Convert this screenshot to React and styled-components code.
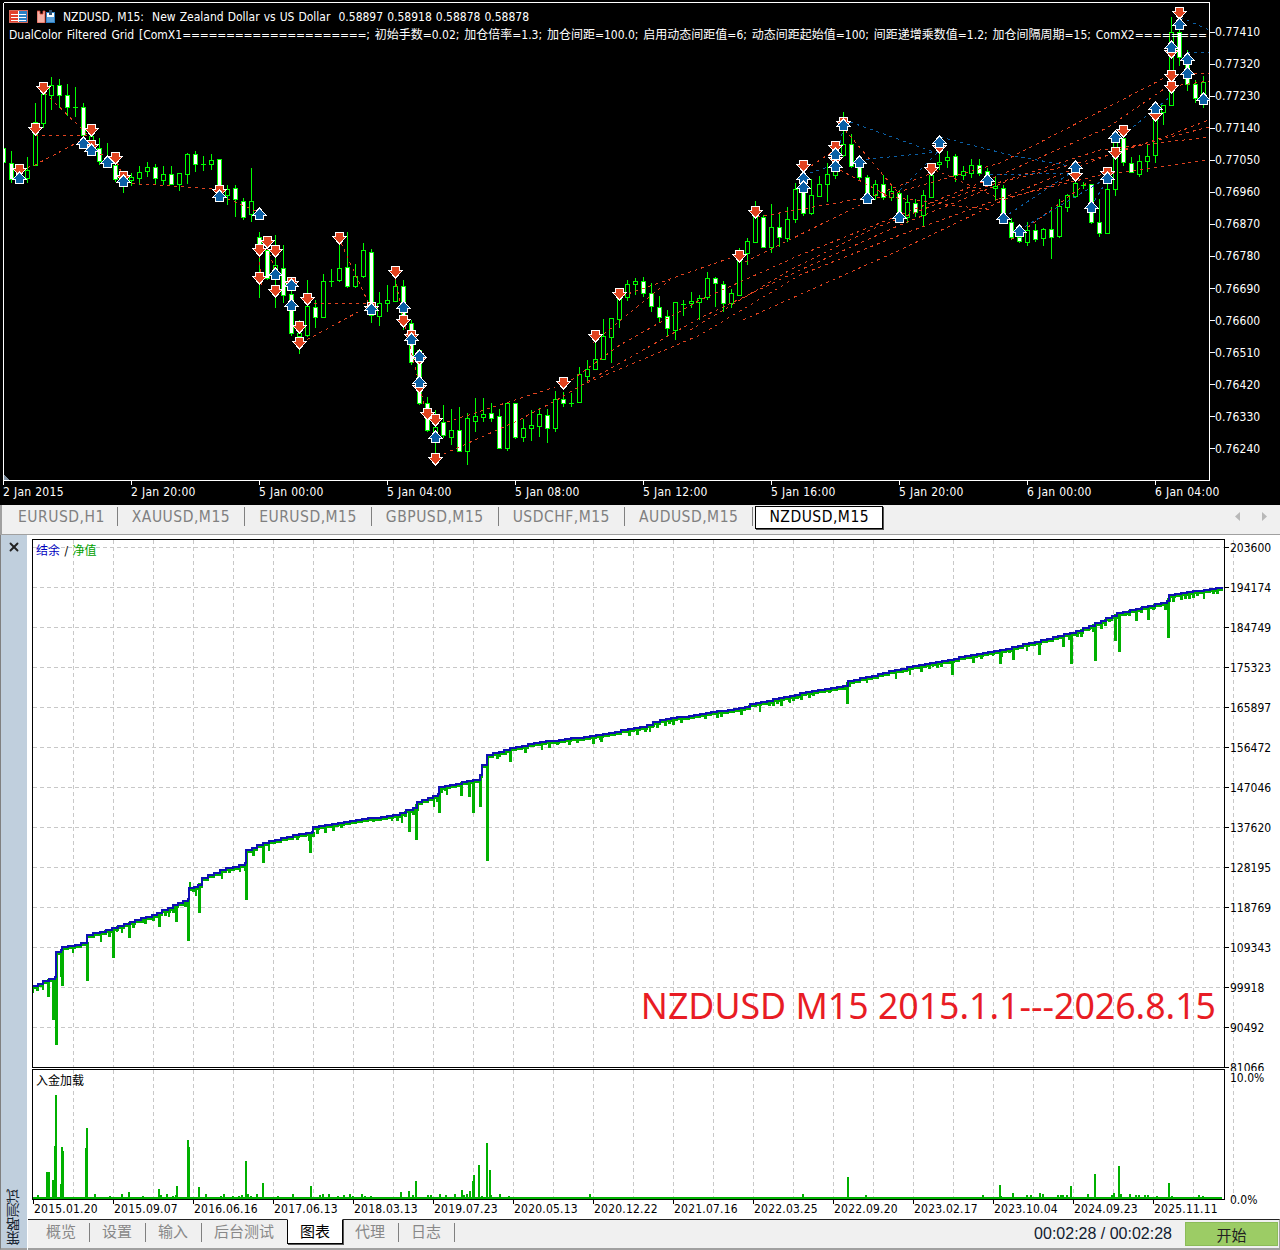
import React from 'react'
import styled, { createGlobalStyle } from 'styled-components'
import { X } from 'lucide-react'

const UI_FONT = '"DejaVu Sans Condensed", "DejaVu Sans", "Noto Sans CJK SC", sans-serif'
const RED = '#e0431f'
const BLUE = '#0b5fa5'

const GlobalStyle = createGlobalStyle`
  html, body { margin: 0; padding: 0; background: #fff; }
  #root { width: 1280px; height: 1250px; overflow: hidden; }
`

// ---- terminal chart data, page pixel coordinates ----
// x, high, low, body top, body bottom, white body
const candles = [
  [3,148,170,148,162,1],[11,151,183,163,179,1],[19,164,184,172,178,1],[27,157,183,170,178,0],
  [35,103,165,122,165,0],[43,94,128,94,123,0],[51,77,110,85,95,0],[59,79,108,85,95,1],
  [67,84,116,95,107,1],[75,87,117,107,107,0],[83,103,135,107,135,1],[91,130,150,136,146,0],
  [99,138,165,148,161,1],[107,143,165,162,165,0],[115,160,182,165,179,1],[123,176,193,180,186,1],
  [131,173,186,177,180,0],[139,166,185,172,178,0],[147,162,177,167,171,0],[155,164,184,167,178,1],
  [163,166,185,174,180,0],[171,166,185,174,184,1],[179,174,191,173,184,0],[187,153,184,154,174,0],
  [195,151,172,154,164,1],[203,156,171,164,164,0],[211,154,170,160,164,0],[219,159,198,159,188,1],
  [227,185,205,189,195,0],[235,185,217,188,199,1],[243,198,220,201,217,1],[251,168,222,201,214,0],
  [259,232,298,237,247,1],[267,240,280,250,278,1],[275,235,308,265,268,0],[283,245,303,268,295,1],
  [291,280,336,294,333,1],[299,320,354,333,336,0],[307,280,337,306,335,0],[315,300,328,307,317,1],
  [323,274,317,281,317,0],[331,269,287,281,281,0],[339,240,282,268,280,0],[347,232,288,267,286,1],
  [355,264,288,276,286,0],[363,243,278,250,276,0],[371,249,323,252,315,1],[379,292,326,303,316,0],
  [387,285,312,300,303,0],[395,275,301,286,301,0],[403,280,330,286,325,1],[411,320,365,323,362,1],
  [419,350,405,350,403,1],[427,397,432,403,430,1],[435,410,466,427,432,0],[443,405,438,422,435,1],
  [451,409,445,430,437,0],[459,407,452,430,451,1],[467,413,465,418,451,0],[475,398,432,416,421,0],
  [483,398,422,414,417,0],[491,403,422,413,418,1],[499,409,449,416,448,1],[507,403,451,403,448,0],
  [515,403,439,403,437,1],[523,419,442,428,437,0],[531,410,441,425,428,0],[539,408,437,414,426,0],
  [547,409,443,415,428,1],[555,391,432,399,428,0],[563,392,407,399,403,1],[571,393,407,403,403,0],
  [579,367,402,374,402,0],[587,360,381,369,376,0],[595,333,369,359,369,0],[603,319,359,336,359,0],
  [611,318,363,318,337,0],[619,290,328,298,319,0],[627,280,301,284,297,0],[635,278,295,281,284,0],
  [643,277,297,281,293,1],[651,283,312,293,306,1],[659,296,322,307,317,1],[667,310,336,316,328,1],
  [675,302,340,302,330,0],[683,300,316,304,304,0],[691,292,308,301,303,0],[699,295,320,298,302,0],
  [707,272,300,278,297,0],[715,277,307,278,283,1],[723,281,312,284,303,1],[731,289,308,293,303,0],
  [739,248,295,260,295,0],[747,238,265,241,253,0],[755,201,243,217,242,0],[763,215,247,217,247,1],
  [771,204,253,227,247,0],[779,214,247,227,237,1],[787,207,242,219,238,0],[795,183,223,189,219,0],
  [803,180,216,190,213,1],[811,179,215,195,213,0],[819,176,196,184,196,0],[827,163,202,174,184,0],
  [835,165,179,170,175,0],[843,112,157,144,155,0],[851,134,168,144,166,1],[859,158,181,165,177,1],
  [867,175,200,177,195,1],[875,180,200,184,195,0],[883,175,200,184,197,1],[891,184,201,191,197,0],
  [899,190,220,193,215,1],[907,195,223,202,217,0],[915,199,217,203,212,1],[923,190,227,195,215,0],
  [931,170,197,175,197,0],[939,150,170,162,164,0],[947,151,168,157,160,0],[955,154,182,156,175,1],
  [963,166,180,171,175,0],[971,159,178,165,173,0],[979,159,176,165,173,1],[987,168,182,171,177,1],
  [995,177,200,186,188,0],[1003,185,220,188,215,1],[1011,218,240,222,237,1],[1019,237,243,237,241,1],
  [1027,222,246,230,242,0],[1035,224,242,230,239,1],[1043,228,246,229,238,0],[1051,207,259,229,237,1],
  [1059,199,238,206,236,0],[1067,194,212,195,207,0],[1075,170,198,183,196,0],[1083,182,189,185,185,0],
  [1091,184,224,184,222,1],[1099,199,237,222,233,1],[1107,170,233,189,233,0],[1115,130,196,140,189,0],
  [1123,130,166,138,162,1],[1131,157,172,163,172,1],[1139,155,177,161,174,0],[1147,144,172,156,161,0],
  [1155,110,163,115,155,0],[1163,105,125,105,112,0],[1171,17,105,32,105,0],[1179,16,66,32,57,1],
  [1187,50,91,63,84,1],[1195,80,103,84,98,1],[1203,76,108,82,97,0],
]

const redLines = [
  [[35,135],[91,135]],[[45,93],[88,135]],[[21,170],[35,165],[82,140]],[[93,152],[113,158]],
  [[117,162],[123,177]],[[125,183],[217,189]],[[221,196],[258,212]],[[259,255],[262,285]],
  [[267,247],[279,280]],[[301,343],[358,312]],[[307,303],[372,303]],[[341,243],[368,302]],
  [[395,277],[403,316]],[[405,326],[425,408]],[[447,422],[555,387]],
  [[437,457],[515,422],[557,400],[590,380],[700,318],[800,270],[900,225],[1010,180],[1110,155],[1170,135],[1209,120]],
  [[566,384],[620,345],[700,300],[800,255],[900,215],[1000,175],[1107,128],[1167,87],[1209,81]],
  [[587,383],[700,335],[800,275],[900,235],[1010,195],[1120,150],[1209,127]],[[593,343],[670,280]],
  [[622,296],[690,272],[733,257]],[[745,262],[870,200],[1000,163],[1087,118],[1170,75],[1209,73]],
  [[743,320],[900,250],[1010,197],[1100,175],[1209,160]],[[690,330],[790,270],[870,230],[960,195],[1100,150],[1209,137]],
  [[757,217],[870,197],[935,172]],[[840,170],[890,197],[990,210]],[[935,170],[1003,200],[1075,178]],
  [[845,130],[900,195]],[[805,170],[835,150]],[[1011,240],[1091,180]],
]

const blueLines = [
  [[850,122],[937,153]],[[859,160],[939,152]],[[940,137],[1010,155],[1075,167]],[[803,175],[835,165],[843,130]],
  [[900,190],[940,150]],[[1003,218],[1075,170]],[[990,175],[1070,173]],[[1019,230],[1107,178]],
  [[1133,127],[1170,97]],[[1180,17],[1209,30]],[[1187,52],[1209,53]],[[1091,207],[1107,180]],
]

const sells = [
  [43,88],[35,129],[19,170],[91,130],[91,146],[115,158],[123,177],[219,191],[267,242],[259,250],[275,251],[259,278],
  [275,291],[291,283],[307,299],[299,327],[299,343],[339,238],[371,308],[395,272],[403,321],[411,336],[419,359],[419,387],
  [427,414],[435,420],[435,459],[563,383],[595,336],[619,294],[739,256],[755,212],[803,166],[835,147],[835,159],[843,123],
  [931,169],[939,147],[1075,175],[1107,173],[1115,153],[1123,131],[1155,115],[1171,52],[1171,76],[1171,87],[1179,13],
]

const buys = [
  [19,178],[83,143],[91,150],[107,162],[123,181],[219,196],[259,214],[275,274],[291,285],[291,305],[371,309],[403,307],
  [411,339],[419,356],[419,382],[435,437],[803,178],[803,187],[835,154],[835,166],[843,125],[859,162],[867,198],[899,217],
  [939,142],[987,180],[1003,218],[1019,231],[1075,167],[1091,207],[1107,178],[1115,137],[1155,108],[1171,47],[1179,24],
  [1187,59],[1187,73],[1203,99],
]

const prices = ['0.77410','0.77320','0.77230','0.77140','0.77050','0.76960','0.76870','0.76780','0.76690','0.76600','0.76510','0.76420','0.76330','0.76240']
const times = ['2 Jan 2015','2 Jan 20:00','5 Jan 00:00','5 Jan 04:00','5 Jan 08:00','5 Jan 12:00','5 Jan 16:00','5 Jan 20:00','6 Jan 00:00','6 Jan 04:00']
const topTabs = ['EURUSD,H1','XAUUSD,M15','EURUSD,M15','GBPUSD,M15','USDCHF,M15','AUDUSD,M15','NZDUSD,M15']
const equityLabels = ['203600','194174','184749','175323','165897','156472','147046','137620','128195','118769','109343','99918','90492','81066']
const dates = ['2015.01.20','2015.09.07','2016.06.16','2017.06.13','2018.03.13','2019.07.23','2020.05.13','2020.12.22','2021.07.16','2022.03.25','2022.09.20','2023.02.17','2023.10.04','2024.09.23','2025.11.11']
const bottomTabs = ['概览','设置','输入','后台测试','图表','代理','日志']

// ---- tester chart data ----
const balanceKeys = [
  [33,986],[43,981],[55,977],[56,952],[61,950],[62,947],[87,942],[87,935],[112,928],[130,922],[157,913],[173,905],
  [188,899],[189,888],[198,885],[202,878],[220,870],[245,863],[246,850],[263,843],[293,835],[312,832],[313,827],[350,821],
  [393,815],[413,808],[417,802],[438,794],[439,787],[473,780],[480,775],[482,765],[487,755],[510,748],[540,742],[590,736],
  [640,727],[660,720],[700,714],[745,707],[750,704],[790,696],[800,693],[843,686],[848,681],[913,666],[1000,650],[1070,633],
  [1095,623],[1117,613],[1167,601],[1169,595],[1222,587],
]

const spikes = [
  [33,993],[43,990],[48,997],[53,1020],[56,1045],[61,977],[62,986],[73,953],[87,981],[101,942],[113,958],[117,932],[122,933],
  [129,938],[143,923],[159,927],[169,917],[176,922],[188,941],[190,882],[196,896],[199,913],[222,879],[240,872],[246,900],
  [263,863],[269,851],[310,853],[392,821],[402,823],[409,832],[416,840],[434,807],[439,813],[447,795],[461,796],[469,797],
  [473,813],[480,807],[487,861],[500,757],[510,762],[542,750],[600,740],[638,733],[650,732],[740,712],[760,712],[790,703],
  [818,693],[847,704],[867,683],[896,679],[903,673],[910,675],[933,667],[952,675],[993,656],[1000,664],[1013,660],[1027,651],
  [1039,655],[1063,647],[1071,664],[1095,661],[1115,641],[1119,652],[1136,621],[1148,620],[1154,609],[1168,638],[1182,600],[1204,599],
]

const loadBars = [
  [47,1172],[49,1172],[53,1180],[55,1146],[56,1095],[61,1184],[62,1147],[63,1151],[86,1148],[87,1128],[129,1192],[159,1189],
  [177,1186],[188,1140],[189,1147],[199,1187],[246,1161],[263,1183],[311,1186],[401,1192],[409,1191],[416,1181],[462,1190],
  [470,1191],[473,1181],[474,1175],[479,1165],[487,1143],[490,1170],[848,1177],[973,1197],[1000,1185],[1013,1193],[1027,1195],
  [1040,1193],[1063,1195],[1071,1186],[1088,1194],[1095,1174],[1114,1193],[1119,1166],[1136,1195],[1148,1195],[1169,1183],[1203,1196],
]

const balanceAt = x => {
  for (let i = 1; i < balanceKeys.length; i++) {
    const [x0, y0] = balanceKeys[i - 1]
    const [x1, y1] = balanceKeys[i]
    if (x <= x1) return x1 === x0 ? y1 : y0 + ((y1 - y0) * (x - x0)) / (x1 - x0)
  }
  return 587
}

// the balance curve moves in small flat steps
const stepPath = () => {
  let d = `M33 ${balanceKeys[0][1]}`
  for (let i = 1; i < balanceKeys.length; i++) {
    const [x0, y0] = balanceKeys[i - 1]
    const [x1, y1] = balanceKeys[i]
    const n = Math.max(1, Math.round((x1 - x0) / 6))
    for (let s = 1; s <= n; s++) {
      d += ` H${Math.round(x0 + ((x1 - x0) * s) / n)} V${Math.round(y0 + ((y1 - y0) * s) / n)}`
    }
  }
  return d
}
const balancePath = stepPath()

const noise = i => {
  const v = Math.sin(i * 12.9898) * 43758.5453
  return v - Math.floor(v)
}

const smallLoad = []
for (let x = 34; x < 1222; x += 3) {
  const chance = x < 500 ? 0.62 : x > 960 ? 0.75 : 0.97
  if (noise(x) > chance) smallLoad.push([x, 1198 - Math.ceil(noise(x + 7) * 4)])
}

// shallow equity dips all along the curve: x, top, depth
const smallDips = []
for (let x = 36; x < 1218; x += 4) {
  if (noise(x + 3) > 0.55) smallDips.push([x, Math.round(balanceAt(x)), Math.round(3 + noise(x + 11) * 5)])
}

const range = (n, f) => Array.from({ length: n }, (_, i) => f(i))

// ---- layout ----
const Page = styled.div`
  width: 1280px;
  height: 1250px;
  display: flex;
  flex-direction: column;
  background: #fff;
  font-family: ${UI_FONT};
  font-size: 12px;
  overflow: hidden;
`

const Terminal = styled.section`
  position: relative;
  flex: 0 0 505px;
  min-height: 0;
  display: flex;
  flex-direction: column;
  background: #000;
  color: #fff;
`

const TerminalBody = styled.div`
  height: 481px;
  display: flex;
`

const Plot = styled.svg`
  display: block;
  flex: none;
  overflow: visible;
  shape-rendering: crispEdges;
`

const PriceAxis = styled.div`
  padding: 16px 0 0 0;
  display: flex;
  flex-direction: column;
`

const PriceLabel = styled.span`
  flex: 0 0 32.07px;
  line-height: 32px;
  letter-spacing: 0.1px;
  color: #fff;
  white-space: nowrap;
`

const TimeAxis = styled.div`
  flex: 1;
  display: flex;
  padding-left: 3px;
  padding-top: 4px;
`

const TimeLabel = styled.span`
  flex: 0 0 128px;
  line-height: 15px;
  letter-spacing: 0.3px;
  white-space: nowrap;
`

const Legend = styled.div`
  position: absolute;
  top: 9px;
  left: 9px;
  width: 1200px;
  overflow: hidden;
  white-space: nowrap;
  line-height: 19px;
`

const LegendTitle = styled.div`
  display: flex;
  align-items: center;
  height: 15px;
  gap: 9px;
`

const LegendText = styled.div`
  white-space: pre;
  word-spacing: 0.6px;
  margin-left: -1px;
  padding-top: 1px;
`

const LegendParams = styled.div`
  margin-top: 2px;
  height: 19px;
  word-spacing: 1.4px;
  white-space: nowrap;
`

const EqualsRun = styled.span`
  letter-spacing: -0.28px;
`

const TopTabs = styled.nav`
  flex: 0 0 30px;
  box-sizing: border-box;
  display: flex;
  align-items: flex-start;
  background: #f0f0f0;
  border-left: 2px solid #a0a0a0;
  border-bottom: 1px solid #a0a0a0;
  position: relative;
`

const TopTab = styled.div`
  height: 19px;
  margin-top: 2px;
  padding: 0 ${p => p.$first ? 12 : 14}px 0 ${p => p.$first ? 16 : 14}px;
  line-height: 21px;
  font-size: 15.5px;
  letter-spacing: 0.5px;
  color: ${p => p.$active ? '#000' : '#808080'};
  border-right: 1px solid ${p => p.$active ? 'transparent' : '#808080'};
  white-space: nowrap;

  ${p => p.$active && `
    height: 21px;
    margin-top: 1px;
    margin-left: 2px;
    background: #fff;
    border: 1px solid #000;
    box-shadow: 1px 1px 0 #555;
    line-height: 21px;
    padding: 0 13px;
  `}
`

const ScrollArrows = styled.div`
  position: absolute;
  right: 13px;
  top: 7px;
  display: flex;
  gap: 20px;
`

const Tester = styled.section`
  flex: 1;
  min-height: 0;
  display: flex;
`

const Sidebar = styled.aside`
  flex: 0 0 27px;
  box-sizing: border-box;
  position: relative;
  display: flex;
  flex-direction: column;
  justify-content: space-between;
  align-items: center;
  background: #c0cfdd;
  border-left: 1px solid #808080;
  border-bottom: 2px solid #a0a0a0;
  padding: 5px 0 3px;
`

const VerticalTitle = styled.span`
  writing-mode: vertical-rl;
  transform: rotate(180deg);
  font-size: 14px;
  line-height: 16px;
  color: #1c2733;
`

const TesterMain = styled.div`
  flex: 1;
  min-width: 0;
  min-height: 0;
  display: flex;
  flex-direction: column;
  padding-top: 4px;
`

const EquityRow = styled.div`
  position: relative;
  flex: 0 0 530px;
  min-height: 0;
  display: flex;
  padding-left: 5px;
`

const EquityAxis = styled.div`
  height: 532px;
  overflow: hidden;
`

const EquityLabels = styled.div`
  margin-top: -11px;
  display: flex;
  flex-direction: column;
`

const AxisLabel = styled.span`
  flex: 0 0 40px;
  line-height: 40px;
  color: #000;
`

const ChartCaption = styled.div`
  position: absolute;
  left: 9px;
  top: 5px;
  line-height: 15px;
  word-spacing: 1px;
  white-space: pre;
`

const Balance = styled.span`color: #0000c0;`
const Equity = styled.span`color: #00a000;`

const Watermark = styled.div`
  position: absolute;
  right: 64px;
  top: 444px;
  font-family: "Noto Sans", "Liberation Sans", sans-serif;
  font-size: 35.7px;
  line-height: 44px;
  color: #e81c24;
  white-space: nowrap;
`

const LoadRow = styled.div`
  position: relative;
  flex: 0 0 131px;
  min-height: 0;
  display: flex;
  padding-left: 5px;
`

const LoadAxis = styled.div`
  height: 139px;
  display: flex;
  flex-direction: column;
  justify-content: space-between;
  padding-top: 1px;
  box-sizing: border-box;
  line-height: 16px;
`

const DateAxis = styled.div`
  flex: 0 0 19px;
  box-sizing: border-box;
  display: flex;
  padding: 1px 0 0 7px;
  line-height: 16px;
`

const DateLabel = styled.span`
  flex: 0 0 80px;
  letter-spacing: 0.2px;
  white-space: nowrap;
  color: #000;
`

const BottomBar = styled.div`
  flex: 1;
  min-height: 0;
  display: flex;
  align-items: flex-start;
  background: #f0f0f0;
  border-top: 1px solid #222;
  border-bottom: 2px solid #a0a0a0;
  border-right: 1px solid #a0a0a0;
  margin-left: 1px;
`

const BottomTabs = styled.nav`
  display: flex;
  padding-left: 0;
`

const BottomTab = styled.div`
  height: 19px;
  margin-top: 3px;
  padding: 0 13px 0 ${p => p.$first ? 18 : 12}px;
  line-height: 19px;
  font-size: 15px;
  color: #888;
  border-right: 1px solid #808080;

  ${p => p.$active && `
    height: 23px;
    margin-top: -1px;
    padding: 0 12px;
    line-height: 24px;
    color: #000;
    background: #fff;
    border: 1px solid #000;
    border-top-color: #fff;
    box-shadow: 1px 1px 0 #555;
  `}
  ${p => p.$beforeActive && 'border-right: 0;'}
`

const StatusArea = styled.div`
  margin-left: auto;
  height: 28px;
  display: flex;
  align-items: center;
  gap: 13px;
  padding: 0 1px 0 0;
`

const Elapsed = styled.span`
  font-family: "Liberation Sans", sans-serif;
  font-size: 16px;
  color: #10202f;
`

const StartButton = styled.button`
  width: 93px;
  height: 24px;
  padding: 0;
  border: 1px solid #8bbb58;
  background: #9ccc65;
  font-family: ${UI_FONT};
  font-size: 15px;
  color: #222;
`

// ---- drawings ----
const SellArrow = ({ x, y }) => (
  <polygon
    points={`${x - 3.5},${y - 5.5} ${x + 4.5},${y - 5.5} ${x + 4.5},${y - 1.5} ${x + 7.5},${y - 1.5} ${x + 0.5},${y + 6} ${x - 6.5},${y - 1.5} ${x - 3.5},${y - 1.5}`}
    fill={RED}
    stroke="#fff"
  />
)

const BuyArrow = ({ x, y }) => (
  <polygon
    points={`${x - 3.5},${y + 5.5} ${x + 4.5},${y + 5.5} ${x + 4.5},${y + 1.5} ${x + 7.5},${y + 1.5} ${x + 0.5},${y - 6} ${x - 6.5},${y + 1.5} ${x - 3.5},${y + 1.5}`}
    fill={BLUE}
    stroke="#fff"
  />
)

const TradeLine = ({ pts, color }) => (
  <polyline points={pts.map(p => p.join(',')).join(' ')} fill="none" stroke={color} strokeDasharray="3 4" />
)

const Candle = ({ c: [x, hi, lo, top, bot, white] }) => (
  <g>
    <line x1={x + 0.5} x2={x + 0.5} y1={hi} y2={lo} stroke="#00ff00" />
    {top === bot
      ? <line x1={x - 2} x2={x + 3} y1={top + 0.5} y2={top + 0.5} stroke="#00ff00" />
      : <rect x={x - 1.5} y={top + 0.5} width={4} height={bot - top} fill={white ? '#fff' : '#000'} stroke="#00ff00" />}
  </g>
)

const TerminalPlot = () => (
  <Plot width="1215" height="481" viewBox="0 0 1215 481">
    <defs>
      <clipPath id="plot-area"><rect x="4" y="3" width="1205" height="477" /></clipPath>
    </defs>
    <polygon points="4,475 4,480 9,480" fill="#8090a0" />
    {range(14, i => {
      const y = Math.round(31.5 + 32.07 * i) + 0.5
      return <line key={i} x1="1210" x2="1215" y1={y} y2={y} stroke="#fff" />
    })}
    {range(10, i => <line key={i} x1={3.5 + 128 * i} x2={3.5 + 128 * i} y1="480" y2="485" stroke="#fff" />)}
    <g clipPath="url(#plot-area)">
      {candles.map(c => <Candle key={c[0]} c={c} />)}
      {redLines.map((pts, i) => <TradeLine key={i} pts={pts} color={RED} />)}
      {blueLines.map((pts, i) => <TradeLine key={i} pts={pts} color={BLUE} />)}
      {sells.map(([x, y], i) => <SellArrow key={i} x={x} y={y} />)}
      {buys.map(([x, y], i) => <BuyArrow key={i} x={x} y={y} />)}
    </g>
    <polyline points="3.5,2.5 1209.5,2.5 1209.5,480.5 3.5,480.5 3.5,2.5" fill="none" stroke="#fff" />
  </Plot>
)

const SymbolIcon = () => (
  <svg width="19" height="13" viewBox="0 0 19 13">
    <rect x="0.5" y="0.5" width="18" height="12" fill="#fff" stroke="#d8695a" />
    <rect x="1" y="1" width="8" height="11" fill="#e2402e" />
    <rect x="10" y="1" width="8" height="11" fill="#2c7fc4" />
    <path d="M2 4.5H17M2 7.5H17M2 10.5H17" stroke="#fff" />
  </svg>
)

const PeriodIcon = () => (
  <svg width="18" height="13" viewBox="0 0 18 13">
    <path d="M0 1H3V4H6V1H8V13H0Z" fill="#f5b0a5" stroke="#d8402e" strokeWidth="0.8" />
    <rect x="9.5" y="2.5" width="8" height="10" fill="#fff" stroke="#2c7fc4" />
    <rect x="12" y="0" width="3" height="5" fill="#2c4f70" />
    <rect x="10" y="7" width="7" height="5" fill="#5ba2dc" />
  </svg>
)

const EquityPlot = () => (
  <Plot width="1198" height="530" viewBox="32 539 1198 530">
    <rect x="32.5" y="539.5" width="1192" height="528" fill="#fff" />
    {range(30, i => <line key={i} x1={73.5 + 40 * i} x2={73.5 + 40 * i} y1="540" y2="1067" stroke="#c8c8c8" strokeDasharray="4 3" />)}
    {range(13, i => <line key={i} x1="33" x2="1224" y1={547.5 + 40 * i} y2={547.5 + 40 * i} stroke="#c8c8c8" strokeDasharray="4 3" />)}
    {range(14, i => <line key={i} x1="1225" x2="1229" y1={547.5 + 40 * i} y2={547.5 + 40 * i} stroke="#000" />)}
    <path d={balancePath} transform="translate(0 2)" fill="none" stroke="#00b000" strokeWidth="2.4" />
    {smallDips.map(([x, y, depth]) => <rect key={x} x={x} y={y} width="3" height={depth} fill="#00b000" />)}
    {spikes.map(([x, y]) => {
      const base = balanceAt(x)
      const depth = Math.abs(y - base)
      return <rect key={x} x={x - 1} y={Math.min(base, y)} width={depth > 12 ? 3 : 2} height={depth} fill="#00b000" />
    })}
    <path d={balancePath} fill="none" stroke="#1010b4" strokeWidth="2.4" />
    <rect x="32.5" y="539.5" width="1192" height="528" fill="none" stroke="#000" />
  </Plot>
)

const LoadPlot = () => (
  <Plot width="1198" height="131" viewBox="32 1069 1198 131">
    <rect x="32.5" y="1069.5" width="1192" height="130" fill="#fff" />
    {range(30, i => <line key={i} x1={73.5 + 40 * i} x2={73.5 + 40 * i} y1="1070" y2="1199" stroke="#c8c8c8" strokeDasharray="4 3" />)}
    {smallLoad.map(([x, y]) => <rect key={x} x={x} y={y} width="2" height={1199 - y} fill="#00b000" />)}
    {loadBars.map(([x, y]) => <rect key={x} x={x - 1} y={y} width="2" height={1199 - y} fill="#00b000" />)}
    <rect x="33" y="1197" width="1189" height="2" fill="#00b000" />
    <rect x="32.5" y="1069.5" width="1192" height="130" fill="none" stroke="#000" />
    {range(15, i => <line key={i} x1={33.5 + 80 * i} x2={33.5 + 80 * i} y1="1200" y2="1204" stroke="#000" />)}
  </Plot>
)

const App = () => (
  <Page>
    <GlobalStyle />
    <Terminal>
      <TerminalBody>
        <TerminalPlot />
        <PriceAxis>
          {prices.map(p => <PriceLabel key={p}>{p}</PriceLabel>)}
        </PriceAxis>
      </TerminalBody>
      <TimeAxis>
        {times.map(t => <TimeLabel key={t}>{t}</TimeLabel>)}
      </TimeAxis>
      <Legend>
        <LegendTitle>
          <SymbolIcon />
          <PeriodIcon />
          <LegendText>NZDUSD, M15:  New Zealand Dollar vs US Dollar  0.58897 0.58918 0.58878 0.58878</LegendText>
        </LegendTitle>
        <LegendParams>DualColor Filtered Grid [ComX1<EqualsRun>=====================</EqualsRun>; 初始手数=0.02; 加仓倍率=1.3; 加仓间距=100.0; 启用动态间距值=6; 动态间距起始值=100; 间距递增乘数值=1.2; 加仓间隔周期=15; ComX2========</LegendParams>
      </Legend>
    </Terminal>

    <TopTabs>
      {topTabs.map((t, i) => (
        <TopTab key={t} $first={i === 0} $active={i === 6}>{t}</TopTab>
      ))}
      <ScrollArrows>
        <svg width="6" height="9" viewBox="0 0 6 9"><path d="M5 0V9L0 4.5Z" fill="#b8b8b8" /></svg>
        <svg width="6" height="9" viewBox="0 0 6 9"><path d="M1 0V9L6 4.5Z" fill="#b8b8b8" /></svg>
      </ScrollArrows>
    </TopTabs>

    <Tester>
      <Sidebar>
        <X size={14} strokeWidth={3.2} color="#222" />
        <VerticalTitle>策略测试</VerticalTitle>
      </Sidebar>
      <TesterMain>
        <EquityRow>
          <EquityPlot />
          <EquityAxis>
            <EquityLabels>
              {equityLabels.map(l => <AxisLabel key={l}>{l}</AxisLabel>)}
            </EquityLabels>
          </EquityAxis>
          <ChartCaption><Balance>结余</Balance> / <Equity>净值</Equity></ChartCaption>
          <Watermark>NZDUSD M15 2015.1.1---2026.8.15</Watermark>
        </EquityRow>
        <LoadRow>
          <LoadPlot />
          <LoadAxis>
            <span>10.0%</span>
            <span>0.0%</span>
          </LoadAxis>
          <ChartCaption>入金加载</ChartCaption>
        </LoadRow>
        <DateAxis>
          {dates.map(d => <DateLabel key={d}>{d}</DateLabel>)}
        </DateAxis>
        <BottomBar>
          <BottomTabs>
            {bottomTabs.map((t, i) => (
              <BottomTab key={t} $first={i === 0} $active={i === 4} $beforeActive={i === 3}>{t}</BottomTab>
            ))}
          </BottomTabs>
          <StatusArea>
            <Elapsed>00:02:28 / 00:02:28</Elapsed>
            <StartButton>开始</StartButton>
          </StatusArea>
        </BottomBar>
      </TesterMain>
    </Tester>
  </Page>
)

export default App
